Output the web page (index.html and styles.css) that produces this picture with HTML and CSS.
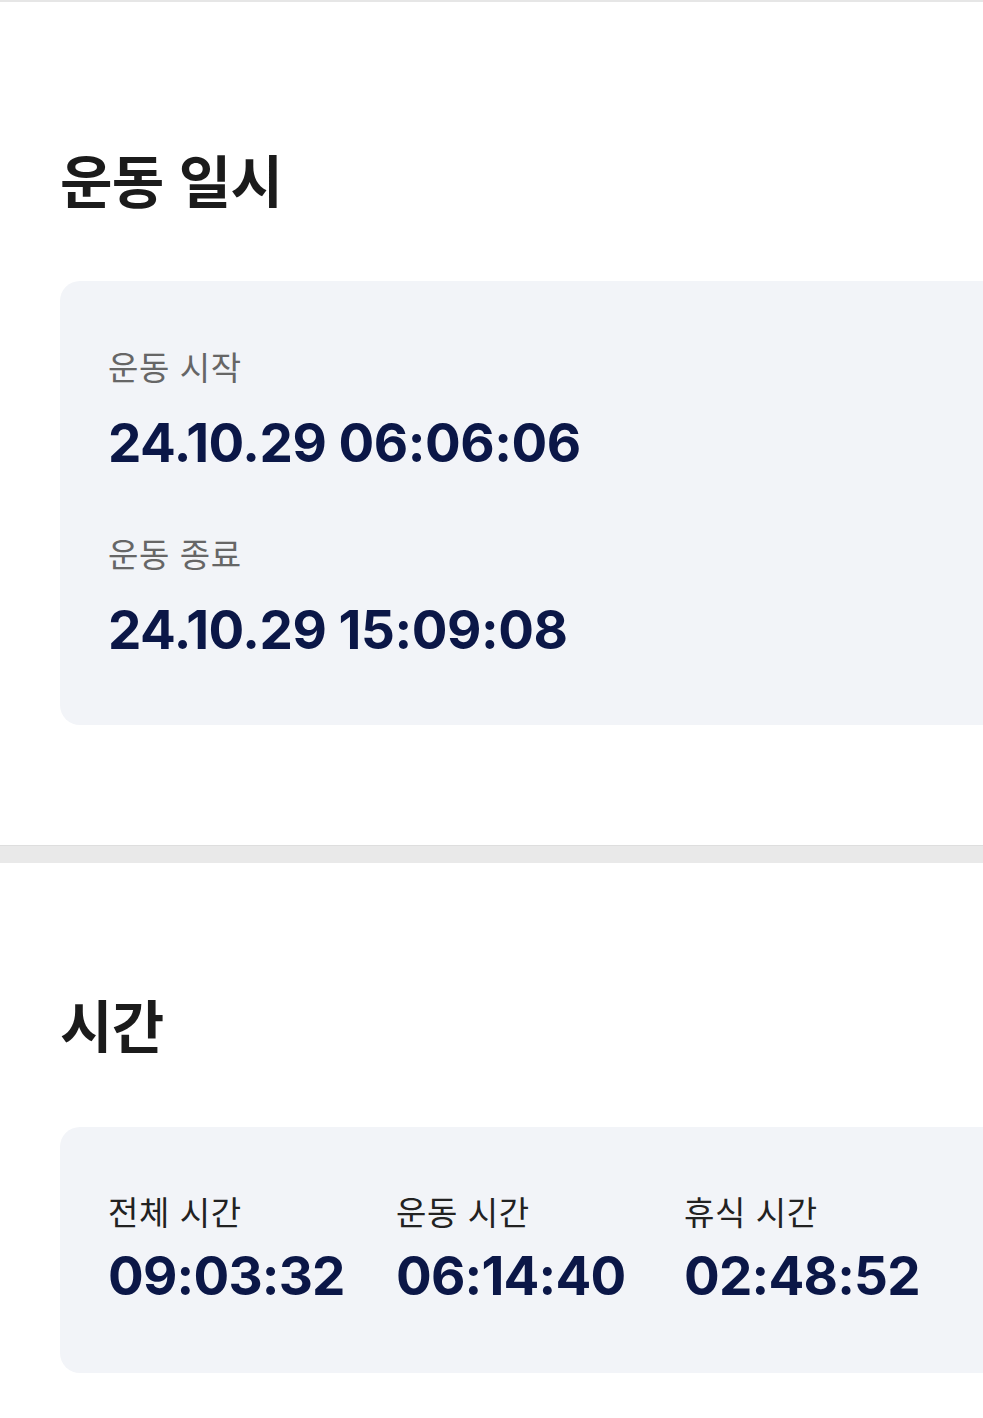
FILE: index.html
```html
<!DOCTYPE html>
<html lang="ko">
<head>
<meta charset="utf-8">
<link rel="stylesheet" href="styles.css">
</head>
<body>
<div class="page">
  <section class="section first">
    <h2 class="title">운동 일시</h2>
    <div class="card card-dates">
      <div class="item">
        <div class="label">운동 시작</div>
        <div class="value">24.10.29 06:06:06</div>
      </div>
      <div class="item">
        <div class="label">운동 종료</div>
        <div class="value">24.10.29 15:09:08</div>
      </div>
    </div>
  </section>
  <div class="divider"></div>
  <section class="section second">
    <h2 class="title">시간</h2>
    <div class="card card-times">
      <div class="col">
        <div class="label">전체 시간</div>
        <div class="value">09:03:32</div>
      </div>
      <div class="col">
        <div class="label">운동 시간</div>
        <div class="value">06:14:40</div>
      </div>
      <div class="col">
        <div class="label">휴식 시간</div>
        <div class="value">02:48:52</div>
      </div>
    </div>
  </section>
</div>
</body>
</html>
```
FILE: styles.css
```css
* { box-sizing: border-box; }
html, body { margin: 0; padding: 0; background: #fff; }
body {
  font-family: Inter, "Noto Sans CJK KR", sans-serif;
  overflow-x: hidden;
  width: 983px;
}
.page {
  border-top: 2px solid #e6e6e6;
}
.section {
  padding-left: 60px;
}
.section.first { padding-top: 136px; padding-bottom: 120px; }
.section.second { padding-top: 120px; padding-bottom: 46px; }
.title {
  margin: 0;
  font-family: "Noto Sans CJK KR", sans-serif;
  font-weight: 700;
  font-size: 57px;
  line-height: 80px;
  color: #1b1b1b;
  letter-spacing: -0.7px;
}
.card {
  background: #f2f4f8;
  border-radius: 20px;
  margin-right: -40px;
}
.card-dates {
  margin-top: 63px;
  padding: 63px 48px 62px;
  display: flex;
  flex-direction: column;
  gap: 55px;
}
.label {
  font-family: "Noto Sans CJK KR", sans-serif;
  font-size: 33px;
  line-height: 44px;
  color: #666;
  letter-spacing: 0.6px;
}
.value {
  font-family: Inter, sans-serif;
  font-weight: 700;
  font-size: 53px;
  line-height: 66px;
  color: #0b1747;
  letter-spacing: -0.45px;
  margin-top: 22px;
}
.divider {
  height: 18px;
  background: #e9e9e9;
  border-top: 1px solid #dedede;
}
.card-times {
  margin-top: 64px;
  padding: 62px 48px 64px;
  display: grid;
  grid-template-columns: 288px 288px 288px;
}
.card-times .label { color: #222; }
.card-times .value { margin-top: 10px; letter-spacing: -0.8px; }
```
